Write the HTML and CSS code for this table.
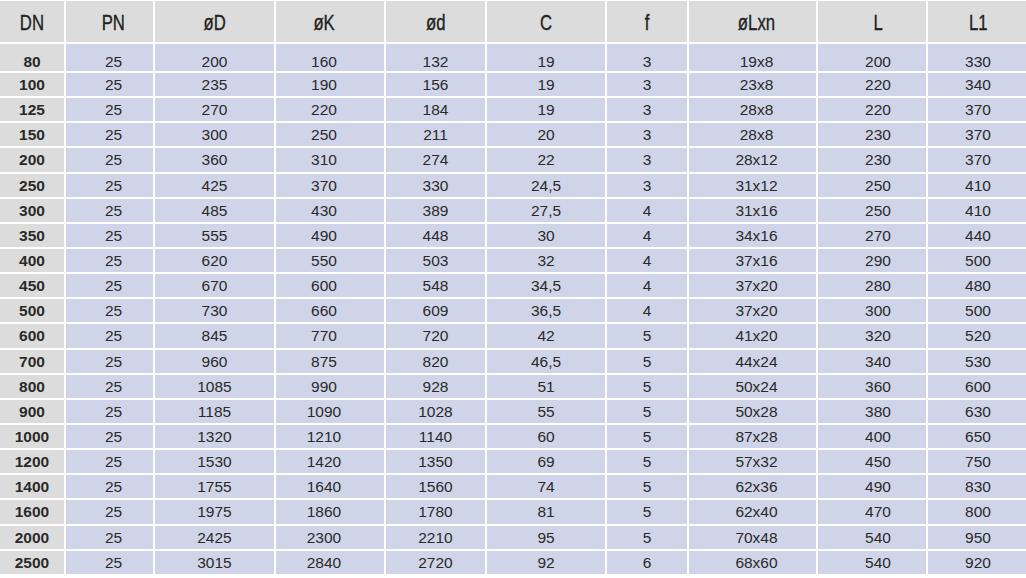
FILE: index.html
```html
<!DOCTYPE html>
<html>
<head>
<meta charset="utf-8">
<link rel="stylesheet" href="styles.css">
</head>
<body>
<table class="spec">
<thead>
<tr><th class="c-dn"><span>DN</span></th><th class="c-pn"><span>PN</span></th><th class="c-d"><span>øD</span></th><th class="c-k"><span>øK</span></th><th class="c-d2"><span>ød</span></th><th class="c-c"><span>C</span></th><th class="c-f"><span>f</span></th><th class="c-l"><span>øLxn</span></th><th class="c-ll"><span>L</span></th><th class="c-l1"><span>L1</span></th></tr>
</thead>
<tbody>
<tr class="first"><td class="dn">80</td><td>25</td><td>200</td><td>160</td><td>132</td><td>19</td><td>3</td><td>19x8</td><td>200</td><td>330</td></tr>
<tr><td class="dn">100</td><td>25</td><td>235</td><td>190</td><td>156</td><td>19</td><td>3</td><td>23x8</td><td>220</td><td>340</td></tr>
<tr><td class="dn">125</td><td>25</td><td>270</td><td>220</td><td>184</td><td>19</td><td>3</td><td>28x8</td><td>220</td><td>370</td></tr>
<tr><td class="dn">150</td><td>25</td><td>300</td><td>250</td><td>211</td><td>20</td><td>3</td><td>28x8</td><td>230</td><td>370</td></tr>
<tr><td class="dn">200</td><td>25</td><td>360</td><td>310</td><td>274</td><td>22</td><td>3</td><td>28x12</td><td>230</td><td>370</td></tr>
<tr><td class="dn">250</td><td>25</td><td>425</td><td>370</td><td>330</td><td>24,5</td><td>3</td><td>31x12</td><td>250</td><td>410</td></tr>
<tr><td class="dn">300</td><td>25</td><td>485</td><td>430</td><td>389</td><td>27,5</td><td>4</td><td>31x16</td><td>250</td><td>410</td></tr>
<tr><td class="dn">350</td><td>25</td><td>555</td><td>490</td><td>448</td><td>30</td><td>4</td><td>34x16</td><td>270</td><td>440</td></tr>
<tr><td class="dn">400</td><td>25</td><td>620</td><td>550</td><td>503</td><td>32</td><td>4</td><td>37x16</td><td>290</td><td>500</td></tr>
<tr><td class="dn">450</td><td>25</td><td>670</td><td>600</td><td>548</td><td>34,5</td><td>4</td><td>37x20</td><td>280</td><td>480</td></tr>
<tr><td class="dn">500</td><td>25</td><td>730</td><td>660</td><td>609</td><td>36,5</td><td>4</td><td>37x20</td><td>300</td><td>500</td></tr>
<tr><td class="dn">600</td><td>25</td><td>845</td><td>770</td><td>720</td><td>42</td><td>5</td><td>41x20</td><td>320</td><td>520</td></tr>
<tr><td class="dn">700</td><td>25</td><td>960</td><td>875</td><td>820</td><td>46,5</td><td>5</td><td>44x24</td><td>340</td><td>530</td></tr>
<tr><td class="dn">800</td><td>25</td><td>1085</td><td>990</td><td>928</td><td>51</td><td>5</td><td>50x24</td><td>360</td><td>600</td></tr>
<tr><td class="dn">900</td><td>25</td><td>1185</td><td>1090</td><td>1028</td><td>55</td><td>5</td><td>50x28</td><td>380</td><td>630</td></tr>
<tr><td class="dn">1000</td><td>25</td><td>1320</td><td>1210</td><td>1140</td><td>60</td><td>5</td><td>87x28</td><td>400</td><td>650</td></tr>
<tr><td class="dn">1200</td><td>25</td><td>1530</td><td>1420</td><td>1350</td><td>69</td><td>5</td><td>57x32</td><td>450</td><td>750</td></tr>
<tr><td class="dn">1400</td><td>25</td><td>1755</td><td>1640</td><td>1560</td><td>74</td><td>5</td><td>62x36</td><td>490</td><td>830</td></tr>
<tr><td class="dn">1600</td><td>25</td><td>1975</td><td>1860</td><td>1780</td><td>81</td><td>5</td><td>62x40</td><td>470</td><td>800</td></tr>
<tr><td class="dn">2000</td><td>25</td><td>2425</td><td>2300</td><td>2210</td><td>95</td><td>5</td><td>70x48</td><td>540</td><td>950</td></tr>
<tr><td class="dn">2500</td><td>25</td><td>3015</td><td>2840</td><td>2720</td><td>92</td><td>6</td><td>68x60</td><td>540</td><td>920</td></tr>
</tbody>
</table>
</body>
</html>
```
FILE: styles.css
```css
html, body {
  margin: 0;
  padding: 0;
  background: #ffffff;
  overflow: hidden;
}
.spec {
  border-collapse: separate;
  border-spacing: 2px;
  margin: -1px -2px 0 -2px;
  table-layout: fixed;
  width: 1030px;
  font-family: "Liberation Sans", Arial, sans-serif;
  color: #2a2a2a;
}
.spec th {
  background: #dcdcdc;
  height: 41px;
  padding: 3px 0 0 0;
  box-sizing: border-box;
  font-family: "Liberation Sans", Arial, sans-serif;
  font-weight: normal;
  font-size: 22px;
  line-height: 24px;
  color: #222;
  -webkit-text-stroke: 0.35px #222;
}
.spec th span {
  display: inline-block;
  transform: scaleX(0.76);
}
.spec td {
  background: #d0d4e8;
  height: 23.15px;
  padding-top: 1px;
  box-sizing: border-box;
  text-align: center;
  font-size: 15.5px;
  line-height: 17px;
}
.spec tr.first td {
  height: 27px;
  vertical-align: bottom;
  padding-top: 0;
}
.spec td.dn {
  background: #dcdcdc;
  font-weight: bold;
}
.spec td, .spec th { padding-left: 0; padding-right: 0; }
.spec td:nth-child(2), .spec th:nth-child(2) { padding-left: 8px; }
.spec td:nth-child(4), .spec th:nth-child(4) { padding-right: 12px; }
.spec td:nth-child(8), .spec th:nth-child(8) { padding-left: 8px; }
.spec td:nth-child(9), .spec th:nth-child(9) { padding-left: 12px; }
.c-dn { width: 64px; }
.c-pn { width: 87px; }
.c-d { width: 119px; }
.c-k { width: 108px; }
.c-d2 { width: 99px; }
.c-c { width: 118px; }
.c-f { width: 80px; }
.c-l { width: 127px; }
.c-ll { width: 108px; }
.c-l1 { width: 100px; }
```
